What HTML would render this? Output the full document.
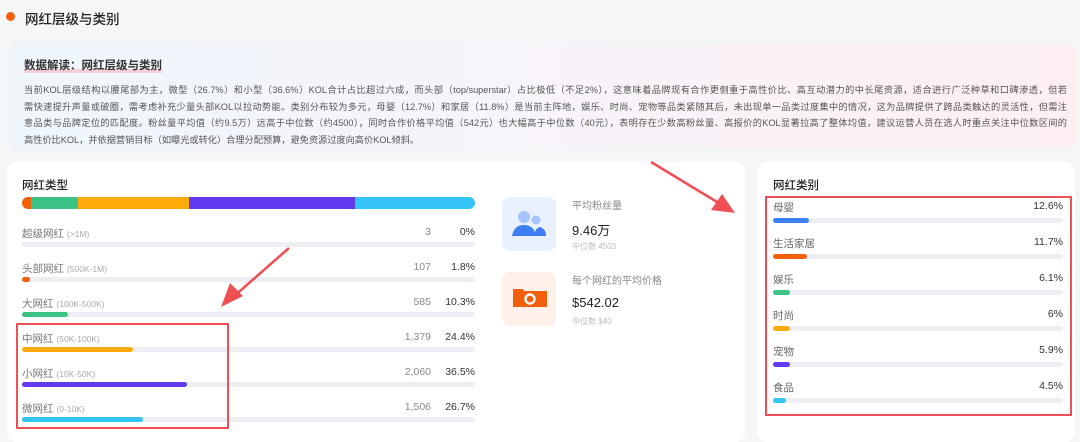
<!DOCTYPE html>
<html><head><meta charset="utf-8"><style>
*{margin:0;padding:0;box-sizing:border-box}
body{width:1080px;height:435px;overflow:hidden;background:#f5f6f8;font-family:"Liberation Sans","Noto Sans CJK SC",sans-serif;position:relative;color:#333}
.abs{position:absolute}
.dot{left:6px;top:12px;width:9px;height:9px;border-radius:50%;background:#f2600c}
.h1{left:25px;top:8px;font-size:13.5px;color:#222;font-weight:500}
.box{left:8px;top:43px;width:1067px;height:106px;border-radius:10px;background:linear-gradient(90deg,#eef6fc 0%,#f7f4fb 45%,#fdeff2 100%)}
.bt{left:24px;top:57px;font-size:11.5px;font-weight:bold;color:#333;background:linear-gradient(0deg,#f5cfd8 0,#f5cfd8 4px,transparent 4px)}
.txt{left:24px;top:82px;width:1043px;font-size:9.2px;line-height:16.5px;color:#555}
.txt div{white-space:nowrap;text-align:justify;text-align-last:justify}
.txt div.last{text-align-last:left}
.card{background:#fff;border-radius:10px}
.ct{font-size:11.5px;color:#222;font-weight:500}
.lab{font-size:10.5px;color:#777}
.lab small{font-size:8.5px;color:#aaa}
.track{height:5px;border-radius:3px;background:#eceef3}
.fill{height:5px;border-radius:3px}
.num{font-size:10.5px;color:#888;text-align:right;width:60px}
.pct{font-size:10.5px;color:#333;text-align:right;width:60px}
</style></head><body>
<div class="abs dot"></div>
<div class="abs h1">网红层级与类别</div>
<div class="abs box"></div>
<div class="abs bt">数据解读：网红层级与类别</div>
<div class="abs txt"><div>当前KOL层级结构以腰尾部为主，微型（26.7%）和小型（36.6%）KOL合计占比超过六成，而头部（top/superstar）占比极低（不足2%），这意味着品牌现有合作更侧重于高性价比、高互动潜力的中长尾资源，适合进行广泛种草和口碑渗透，但若</div><div>需快速提升声量或破圈，需考虑补充少量头部KOL以拉动势能。类别分布较为多元，母婴（12.7%）和家居（11.8%）是当前主阵地，娱乐、时尚、宠物等品类紧随其后，未出现单一品类过度集中的情况，这为品牌提供了跨品类触达的灵活性，但需注</div><div>意品类与品牌定位的匹配度。粉丝量平均值（约9.5万）远高于中位数（约4500），同时合作价格平均值（542元）也大幅高于中位数（40元），表明存在少数高粉丝量、高报价的KOL显著拉高了整体均值，建议运营人员在选人时重点关注中位数区间的</div><div class="last">高性价比KOL，并依据营销目标（如曝光或转化）合理分配预算，避免资源过度向高价KOL倾斜。</div></div>

<div class="abs card" style="left:7px;top:162px;width:738px;height:280px"></div>
<div class="abs card" style="left:757px;top:162px;width:318px;height:280px"></div>

<div class="abs ct" style="left:22px;top:177px">网红类型</div>
<div class="abs" style="left:22px;top:197px;width:453px;height:12px;border-radius:6px;overflow:hidden;display:flex">
<div style="width:9px;background:#f2600c"></div><div style="width:47px;background:#3cc386"></div><div style="width:111px;background:#fcab0b"></div><div style="width:166px;background:#6139f0"></div><div style="flex:1;background:#33c5f7"></div></div>

<div class="abs lab" style="left:22px;top:226px">超级网红 <small>(>1M)</small></div><div class="abs num" style="left:371px;top:226px">3</div><div class="abs pct" style="left:415px;top:226px">0%</div>
<div class="abs track" style="left:22px;top:242px;width:453px"></div>

<div class="abs lab" style="left:22px;top:261px">头部网红 <small>(500K-1M)</small></div><div class="abs num" style="left:371px;top:261px">107</div><div class="abs pct" style="left:415px;top:261px">1.8%</div>
<div class="abs track" style="left:22px;top:277px;width:453px"><div class="fill" style="width:8px;background:#f2600c"></div></div>

<div class="abs lab" style="left:22px;top:296px">大网红 <small>(100K-500K)</small></div><div class="abs num" style="left:371px;top:296px">585</div><div class="abs pct" style="left:415px;top:296px">10.3%</div>
<div class="abs track" style="left:22px;top:312px;width:453px"><div class="fill" style="width:46px;background:#3cc386"></div></div>

<div class="abs lab" style="left:22px;top:331px">中网红 <small>(50K-100K)</small></div><div class="abs num" style="left:371px;top:331px">1,379</div><div class="abs pct" style="left:415px;top:331px">24.4%</div>
<div class="abs track" style="left:22px;top:347px;width:453px"><div class="fill" style="width:111px;background:#fcab0b"></div></div>

<div class="abs lab" style="left:22px;top:366px">小网红 <small>(10K-50K)</small></div><div class="abs num" style="left:371px;top:366px">2,060</div><div class="abs pct" style="left:415px;top:366px">36.5%</div>
<div class="abs track" style="left:22px;top:382px;width:453px"><div class="fill" style="width:165px;background:#6139f0"></div></div>

<div class="abs lab" style="left:22px;top:401px">微网红 <small>(0-10K)</small></div><div class="abs num" style="left:371px;top:401px">1,506</div><div class="abs pct" style="left:415px;top:401px">26.7%</div>
<div class="abs track" style="left:22px;top:417px;width:453px"><div class="fill" style="width:121px;background:#33c5f7"></div></div>

<div class="abs" style="left:502px;top:197px;width:54px;height:54px;border-radius:8px;background:#e9f1fe"></div>
<svg class="abs" style="left:510px;top:208px" width="40" height="32"><circle cx="14" cy="9" r="6" fill="#a7c3fa"/><circle cx="26" cy="12" r="4.5" fill="#a7c3fa"/><path d="M2 28 Q4 17 14 17 Q24 17 26 28 Z" fill="#3d7ef5"/><path d="M24 28 Q25 20 30 19 Q36 21 36 28 Z" fill="#3d7ef5"/></svg>
<div class="abs" style="left:572px;top:197px;font-size:10px;color:#888">平均粉丝量</div>
<div class="abs" style="left:572px;top:220px;font-size:13px;color:#222">9.46万</div>
<div class="abs" style="left:572px;top:241px;font-size:8px;color:#bbb">中位数 4503</div>

<div class="abs" style="left:502px;top:272px;width:54px;height:54px;border-radius:8px;background:#fff0ea"></div>
<svg class="abs" style="left:510px;top:286px" width="40" height="26"><path d="M3 3 H13 L14 5 H37 V21 H3 Z" fill="#f2600c"/><circle cx="20" cy="13" r="4.5" fill="none" stroke="#fff" stroke-width="2.4"/></svg>
<div class="abs" style="left:572px;top:272px;font-size:10px;color:#888">每个网红的平均价格</div>
<div class="abs" style="left:572px;top:295px;font-size:13px;color:#222">$542.02</div>
<div class="abs" style="left:572px;top:316px;font-size:8px;color:#bbb">中位数 $40</div>

<div class="abs ct" style="left:773px;top:177px">网红类别</div>
<div class="abs" style="left:773px;top:200px;width:290px">
<div style="position:relative;height:36px"><div class="lab" style="color:#666">母婴</div><div class="pct" style="position:absolute;right:0;top:0">12.6%</div><div class="track" style="margin-top:3px"><div class="fill" style="width:36px;background:#3b7ff5"></div></div></div>
<div style="position:relative;height:36px"><div class="lab" style="color:#666">生活家居</div><div class="pct" style="position:absolute;right:0;top:0">11.7%</div><div class="track" style="margin-top:3px"><div class="fill" style="width:34px;background:#f2600c"></div></div></div>
<div style="position:relative;height:36px"><div class="lab" style="color:#666">娱乐</div><div class="pct" style="position:absolute;right:0;top:0">6.1%</div><div class="track" style="margin-top:3px"><div class="fill" style="width:17px;background:#3cc386"></div></div></div>
<div style="position:relative;height:36px"><div class="lab" style="color:#666">时尚</div><div class="pct" style="position:absolute;right:0;top:0">6%</div><div class="track" style="margin-top:3px"><div class="fill" style="width:17px;background:#fcab0b"></div></div></div>
<div style="position:relative;height:36px"><div class="lab" style="color:#666">宠物</div><div class="pct" style="position:absolute;right:0;top:0">5.9%</div><div class="track" style="margin-top:3px"><div class="fill" style="width:17px;background:#6139f0"></div></div></div>
<div style="position:relative;height:36px"><div class="lab" style="color:#666">食品</div><div class="pct" style="position:absolute;right:0;top:0">4.5%</div><div class="track" style="margin-top:3px"><div class="fill" style="width:13px;background:#33c5f7"></div></div></div>
</div>

<div class="abs" style="left:16px;top:323px;width:213px;height:106px;border:2.5px solid #ef4f55"></div>
<div class="abs" style="left:765px;top:196px;width:307px;height:220px;border:2.5px solid #ef4f55"></div>
<svg class="abs" style="left:0;top:0" width="1080" height="435">
<line x1="289" y1="248" x2="232" y2="298" stroke="#ef4f55" stroke-width="2.5"/>
<polygon points="221,307 230,283 243,296" fill="#ef4f55"/>
<line x1="651" y1="162" x2="722" y2="205" stroke="#ef4f55" stroke-width="2.5"/>
<polygon points="735,213 711,210 722,194" fill="#ef4f55"/>
</svg>
</body></html>
